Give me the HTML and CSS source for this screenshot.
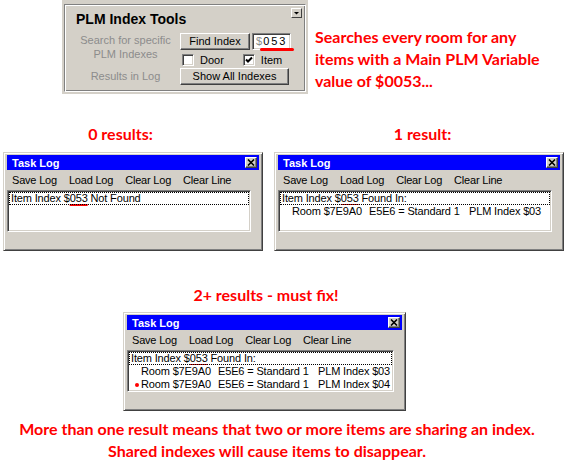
FILE: index.html
```html
<!DOCTYPE html>
<html>
<head>
<meta charset="utf-8">
<link rel="stylesheet" href="styles.css">
</head>
<body>
<div class="top">
  <div class="panel">
    <div class="groove">
      <div class="ghead">
        <div class="gtitle">PLM Index Tools</div>
        <div class="dd"><svg width="9" height="8" viewBox="0 0 9 8"><polygon points="2,3 7,3 4.5,5.5" fill="#000"/></svg></div>
      </div>
      <div class="gbody">
        <div class="lbl lbl1">Search for specific<br>PLM Indexes</div>
        <div class="r1">
          <div class="btn find">Find Index</div>
          <div class="tbox"><span class="dollar">$</span><span class="val">053</span><span class="redline"></span></div>
        </div>
        <div class="r2">
          <span class="cb"></span><span class="cbl">Door</span>
          <span class="cb cb2"><svg width="8" height="8" viewBox="0 0 8 8"><polyline points="1,3.5 3,5.5 7,1.5" fill="none" stroke="#000" stroke-width="2"/></svg></span><span class="cbl">Item</span>
        </div>
        <div class="lbl lbl3">Results in Log</div>
        <div class="r3"><div class="btn show">Show All Indexes</div></div>
      </div>
    </div>
  </div>
  <div class="red note">Searches every room for any<br>items with a Main PLM Variable<br>value of $0053...</div>
</div>

<div class="results">
  <div class="col c1">
    <div class="red head">0 results:</div>
    <div class="win w1">
      <div class="titlebar"><span class="title">Task Log</span><span class="close"><svg width="8" height="7" viewBox="0 0 8 7"><path d="M1 0.5 L7 6.5 M7 0.5 L1 6.5" stroke="#000" stroke-width="1.6"/></svg></span></div>
      <div class="menu"><span>Save Log</span><span>Load Log</span><span>Clear Log</span><span>Clear Line</span></div>
      <div class="list">
        <div class="row focus">Item Index $<span class="mark">053</span> Not Found</div>
      </div>
    </div>
  </div>
  <div class="col c2">
    <div class="red head">1 result:</div>
    <div class="win w2">
      <div class="titlebar"><span class="title">Task Log</span><span class="close"><svg width="8" height="7" viewBox="0 0 8 7"><path d="M1 0.5 L7 6.5 M7 0.5 L1 6.5" stroke="#000" stroke-width="1.6"/></svg></span></div>
      <div class="menu"><span>Save Log</span><span>Load Log</span><span>Clear Log</span><span>Clear Line</span></div>
      <div class="list">
        <div class="row focus">Item Index $<span class="mark thin">053</span> Found In:</div>
        <div class="row sub"><span class="c-room">Room $7E9A0</span><span class="c-std">E5E6 = Standard 1</span><span>PLM Index $03</span></div>
      </div>
    </div>
  </div>
</div>

<div class="sec3">
  <div class="red head">2+ results - must fix!</div>
  <div class="win w3">
    <div class="titlebar"><span class="title">Task Log</span><span class="close"><svg width="8" height="7" viewBox="0 0 8 7"><path d="M1 0.5 L7 6.5 M7 0.5 L1 6.5" stroke="#000" stroke-width="1.6"/></svg></span></div>
    <div class="menu"><span>Save Log</span><span>Load Log</span><span>Clear Log</span><span>Clear Line</span></div>
    <div class="list">
      <div class="row focus">Item Index $<span class="mark thin">053</span> Found In:</div>
      <div class="row sub"><span class="c-room">Room $7E9A0</span><span class="c-std">E5E6 = Standard 1</span><span>PLM Index $03</span></div>
      <div class="row sub"><span class="c-room"><span class="dot"></span>Room $7E9A0</span><span class="c-std">E5E6 = Standard 1</span><span>PLM Index $04</span></div>
    </div>
  </div>
</div>

<div class="red foot">
  <div class="l1">More than one result means that two or more items are sharing an index.</div>
  <div class="l2">Shared indexes will cause items to disappear.</div>
</div>
</body>
</html>
```

FILE: styles.css
```css
* { box-sizing: border-box; }
html, body { margin: 0; padding: 0; }
body {
  width: 565px;
  height: 463px;
  overflow: hidden;
  background: #fff;
  font-family: "Liberation Sans", Arial, sans-serif;
  font-size: 11px;
  color: #000;
}
.red {
  color: #f00;
  font-family: Lato, "Open Sans", sans-serif;
  font-weight: 700;
  font-size: 16px;
}

/* top panel */
.top { display: flex; align-items: flex-start; height: 95px; }
.panel {
  margin-left: 62px;
  width: 246px;
  height: 94px;
  background: #d4d0c8;
  padding: 4px 0 0 2px;
}
.groove {
  width: 242px;
  height: 88px;
  border: 1px solid;
  border-color: #808080 #fff #fff #808080;
  box-shadow: inset 1px 1px #fff, inset -1px -1px #808080;
  padding: 1px;
}
.ghead { display: flex; justify-content: space-between; height: 27px; }
.gtitle { margin: 5px 0 0 10px; font-size: 14px; font-weight: 700; line-height: 16px; }
.dd {
  width: 11px;
  height: 10px;
  margin: 2px 2px 0 0;
  background: #d4d0c8;
  border: 1px solid;
  border-color: #fff #404040 #404040 #fff;
  display: flex;
  align-items: center;
  justify-content: center;
}
.dd svg { display: block; }
.gbody {
  display: grid;
  grid-template-columns: 114px 1fr;
  grid-template-rows: 17px 17px 19px;
}
.lbl { color: #8c8c8c; text-align: center; padding-left: 5px; line-height: 14px; }
.lbl1 { grid-column: 1; grid-row: 1 / 3; }
.lbl3 { grid-column: 1; grid-row: 3; padding-top: 2px; }
.r1 { grid-column: 2; grid-row: 1; display: flex; }
.r2 { grid-column: 2; grid-row: 2; display: flex; align-items: flex-start; padding-top: 4px; }
.r3 { grid-column: 2; grid-row: 3; padding-top: 1px; }
.btn {
  background: #d4d0c8;
  border: 1px solid;
  border-color: #fff #404040 #404040 #fff;
  box-shadow: inset -1px -1px #808080;
  display: flex;
  align-items: center;
  justify-content: center;
  height: 17px;
  line-height: 13px;
}
.find { width: 70px; }
.show { width: 109px; }
.tbox {
  position: relative;
  margin-left: 2px;
  width: 39px;
  height: 17px;
  background: #fff;
  border: 1px solid;
  border-color: #808080 #fff #fff #808080;
  box-shadow: inset 1px 1px #404040, inset -1px -1px #d4d0c8;
  padding: 0 0 0 3px;
  line-height: 15px;
  font-size: 11px;
}
.dollar { color: #8c8c8c; }
.val { letter-spacing: 2px; margin-left: 1px; }
.redline {
  position: absolute;
  left: 7px;
  top: 14px;
  width: 34px;
  height: 3px;
  border-radius: 2px;
  background: #f00;
}
.cb {
  width: 12px;
  height: 12px;
  margin-left: 2px;
  background: #fff;
  border: 1px solid;
  border-color: #808080 #fff #fff #808080;
  box-shadow: inset 1px 1px #404040, inset -1px -1px #d4d0c8;
  display: flex;
  align-items: center;
  justify-content: center;
}
.cb2 { margin-left: 19px; }
.cb svg { display: block; }
.cbl { margin-left: 6px; line-height: 13px; }

.note { margin: 26px 0 0 7px; line-height: 22px; }

/* result windows */
.results { display: flex; margin-top: 30px; padding-left: 3px; gap: 11px; }
.col { display: flex; flex-direction: column; }
.head { height: 18px; line-height: 18px; text-align: center; margin-bottom: 9px; }
.c1 .head { padding-right: 25px; }
.c2 .head { padding-left: 7px; }

.win {
  background: #d4d0c8;
  border: 1px solid;
  border-color: #d4d0c8 #404040 #404040 #d4d0c8;
  box-shadow: inset 1px 1px #fff, inset -1px -1px #808080;
  padding: 2px 3px 0 3px;
  height: 99px;
}
.w1 { width: 260px; }
.w2 { width: 290px; }
.w3 { width: 283px; }
.titlebar {
  height: 15px;
  background: #00f;
  display: flex;
  justify-content: space-between;
  align-items: flex-start;
  padding-left: 5px;
}
.title { color: #fff; font-weight: 700; line-height: 15px; padding-top: 1px; }
.close {
  width: 12px;
  height: 11px;
  margin: 2px 2px 0 0;
  background: #d4d0c8;
  border: 1px solid;
  border-color: #fff #404040 #404040 #fff;
  box-shadow: inset -1px -1px #808080;
  display: flex;
  align-items: center;
  justify-content: center;
}
.close svg { display: block; margin: 0 1px 1px 0; }
.menu { display: flex; height: 20px; line-height: 20px; margin-left: -1px; letter-spacing: -0.2px; }
.menu span { padding: 0 6px; }
.list {
  height: 42px;
  margin-right: 8px;
  background: #fff;
  border: 1px solid;
  border-color: #808080 #fff #fff #808080;
  box-shadow: inset 1px 1px #404040, inset -1px -1px #d4d0c8;
  padding: 1px;
  overflow: hidden;
  letter-spacing: -0.15px;
}
.row { height: 13px; line-height: 13px; padding-left: 2px; white-space: pre; }
.focus { outline: 1px dotted #000; outline-offset: -1px; }
.sub { padding-left: 12px; }
.c-room { display: inline-block; width: 77px; }
.c-std { display: inline-block; width: 100px; }
.mark {
  text-decoration: underline 2px #f00;
  text-underline-offset: 2px;
  text-decoration-skip-ink: none;
}
.mark.thin { text-decoration-thickness: 1px; text-decoration-color: #d00000; }
.dot {
  display: inline-block;
  width: 4px;
  height: 4px;
  border-radius: 50%;
  background: #f00;
  margin-left: -6px;
  margin-right: 2px;
  vertical-align: 1px;
}

.sec3 { display: flex; flex-direction: column; align-items: flex-start; margin: 35px 0 0 123px; }
.sec3 .head { width: 283px; padding-left: 3px; margin-bottom: 8px; }

.foot { margin-top: 7px; line-height: 22px; text-align: center; }
.l1 { padding-right: 11px; }
.l2 { padding-right: 31px; }
```
